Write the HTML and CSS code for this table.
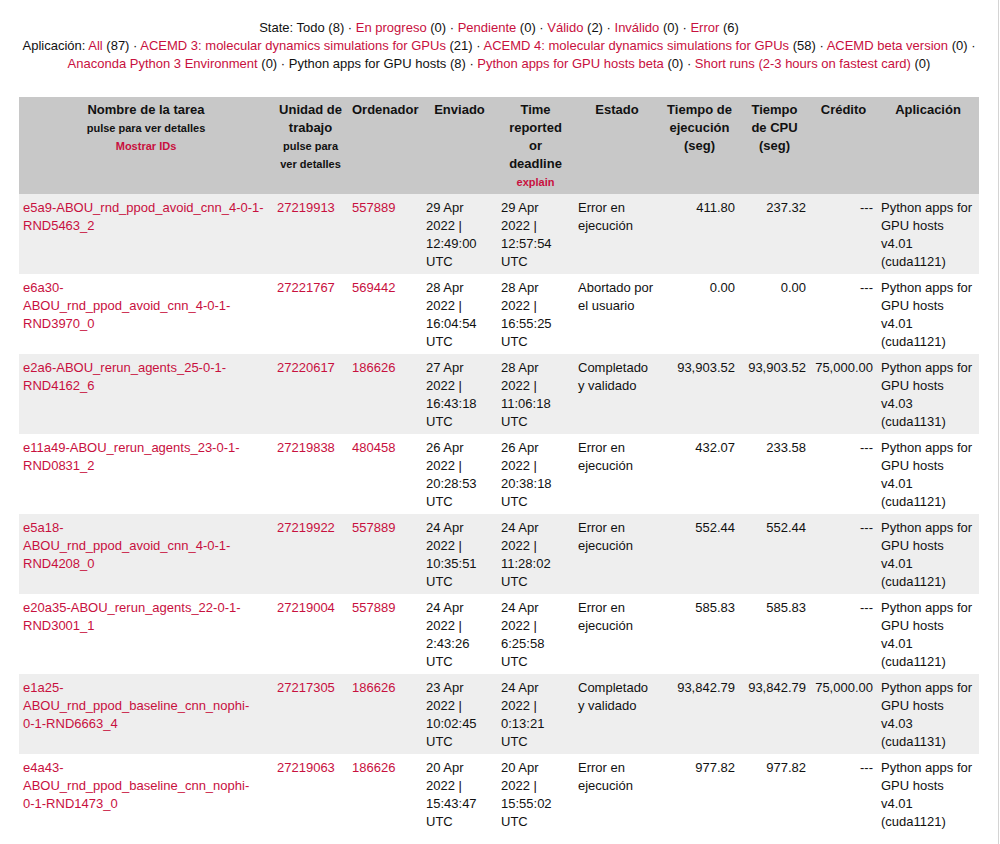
FILE: index.html
```html
<!DOCTYPE html>
<html lang="es">
<head>
<meta charset="utf-8">
<title>Tareas</title>
<link rel="stylesheet" href="styles.css">
</head>
<body>
<div class="page">
  <div class="filters">
    State: Todo (8) · <a href="#">En progreso</a> (0) · <a href="#">Pendiente</a> (0) · <a href="#">Válido</a> (2) · <a href="#">Inválido</a> (0) · <a href="#">Error</a> (6)<br>
    Aplicación: <a href="#">All</a> (87) · <a href="#">ACEMD 3: molecular dynamics simulations for GPUs</a> (21) · <a href="#">ACEMD 4: molecular dynamics simulations for GPUs</a> (58) · <a href="#">ACEMD beta version</a> (0) · <a href="#">Anaconda Python 3 Environment</a> (0) · Python apps for GPU hosts (8) · <a href="#">Python apps for GPU hosts beta</a> (0) · <a href="#">Short runs (2-3 hours on fastest card)</a> (0)
  </div>
  <table class="tasks">
    <colgroup>
      <col class="c-name"><col class="c-wu"><col class="c-host"><col class="c-sent"><col class="c-rep"><col class="c-state"><col class="c-run"><col class="c-cpu"><col class="c-cred"><col class="c-app">
    </colgroup>
    <thead>
      <tr>
        <th>Nombre de la tarea<span class="sub">pulse para ver detalles</span><a class="sub" href="#">Mostrar IDs</a></th>
        <th>Unidad de trabajo<span class="sub">pulse para ver detalles</span></th>
        <th>Ordenador</th>
        <th>Enviado</th>
        <th>Time reported or deadline<a class="sub" href="#">explain</a></th>
        <th>Estado</th>
        <th>Tiempo de ejecución (seg)</th>
        <th>Tiempo de CPU (seg)</th>
        <th>Crédito</th>
        <th>Aplicación</th>
      </tr>
    </thead>
    <tbody>
      <tr>
        <td><a href="#">e5a9-ABOU_rnd_ppod_avoid_cnn_4&#8209;0&#8209;1-RND5463_2</a></td>
        <td><a href="#">27219913</a></td>
        <td><a href="#">557889</a></td>
        <td>29 Apr 2022 | 12:49:00 UTC</td>
        <td>29 Apr 2022 | 12:57:54 UTC</td>
        <td>Error en ejecución</td>
        <td class="num">411.80</td>
        <td class="num">237.32</td>
        <td class="num">---</td>
        <td>Python apps for GPU hosts v4.01 (cuda1121)</td>
      </tr>
      <tr>
        <td><a href="#">e6a30-ABOU_rnd_ppod_avoid_cnn_4&#8209;0&#8209;1-RND3970_0</a></td>
        <td><a href="#">27221767</a></td>
        <td><a href="#">569442</a></td>
        <td>28 Apr 2022 | 16:04:54 UTC</td>
        <td>28 Apr 2022 | 16:55:25 UTC</td>
        <td>Abortado por el usuario</td>
        <td class="num">0.00</td>
        <td class="num">0.00</td>
        <td class="num">---</td>
        <td>Python apps for GPU hosts v4.01 (cuda1121)</td>
      </tr>
      <tr>
        <td><a href="#">e2a6-ABOU_rerun_agents_25&#8209;0&#8209;1-RND4162_6</a></td>
        <td><a href="#">27220617</a></td>
        <td><a href="#">186626</a></td>
        <td>27 Apr 2022 | 16:43:18 UTC</td>
        <td>28 Apr 2022 | 11:06:18 UTC</td>
        <td>Completado y validado</td>
        <td class="num">93,903.52</td>
        <td class="num">93,903.52</td>
        <td class="num">75,000.00</td>
        <td>Python apps for GPU hosts v4.03 (cuda1131)</td>
      </tr>
      <tr>
        <td><a href="#">e11a49-ABOU_rerun_agents_23&#8209;0&#8209;1-RND0831_2</a></td>
        <td><a href="#">27219838</a></td>
        <td><a href="#">480458</a></td>
        <td>26 Apr 2022 | 20:28:53 UTC</td>
        <td>26 Apr 2022 | 20:38:18 UTC</td>
        <td>Error en ejecución</td>
        <td class="num">432.07</td>
        <td class="num">233.58</td>
        <td class="num">---</td>
        <td>Python apps for GPU hosts v4.01 (cuda1121)</td>
      </tr>
      <tr>
        <td><a href="#">e5a18-ABOU_rnd_ppod_avoid_cnn_4&#8209;0&#8209;1-RND4208_0</a></td>
        <td><a href="#">27219922</a></td>
        <td><a href="#">557889</a></td>
        <td>24 Apr 2022 | 10:35:51 UTC</td>
        <td>24 Apr 2022 | 11:28:02 UTC</td>
        <td>Error en ejecución</td>
        <td class="num">552.44</td>
        <td class="num">552.44</td>
        <td class="num">---</td>
        <td>Python apps for GPU hosts v4.01 (cuda1121)</td>
      </tr>
      <tr>
        <td><a href="#">e20a35-ABOU_rerun_agents_22&#8209;0&#8209;1-RND3001_1</a></td>
        <td><a href="#">27219004</a></td>
        <td><a href="#">557889</a></td>
        <td>24 Apr 2022 | 2:43:26 UTC</td>
        <td>24 Apr 2022 | 6:25:58 UTC</td>
        <td>Error en ejecución</td>
        <td class="num">585.83</td>
        <td class="num">585.83</td>
        <td class="num">---</td>
        <td>Python apps for GPU hosts v4.01 (cuda1121)</td>
      </tr>
      <tr>
        <td><a href="#">e1a25-ABOU_rnd_ppod_baseline_cnn_nophi-0&#8209;1&#8209;RND6663_4</a></td>
        <td><a href="#">27217305</a></td>
        <td><a href="#">186626</a></td>
        <td>23 Apr 2022 | 10:02:45 UTC</td>
        <td>24 Apr 2022 | 0:13:21 UTC</td>
        <td>Completado y validado</td>
        <td class="num">93,842.79</td>
        <td class="num">93,842.79</td>
        <td class="num">75,000.00</td>
        <td>Python apps for GPU hosts v4.03 (cuda1131)</td>
      </tr>
      <tr>
        <td><a href="#">e4a43-ABOU_rnd_ppod_baseline_cnn_nophi-0&#8209;1&#8209;RND1473_0</a></td>
        <td><a href="#">27219063</a></td>
        <td><a href="#">186626</a></td>
        <td>20 Apr 2022 | 15:43:47 UTC</td>
        <td>20 Apr 2022 | 15:55:02 UTC</td>
        <td>Error en ejecución</td>
        <td class="num">977.82</td>
        <td class="num">977.82</td>
        <td class="num">---</td>
        <td>Python apps for GPU hosts v4.01 (cuda1121)</td>
      </tr>
    </tbody>
  </table>
</div>
</body>
</html>
```

FILE: styles.css
```css
html, body {
  margin: 0;
  padding: 0;
  background: #fff;
}
body {
  font-family: "Liberation Sans", Arial, sans-serif;
  font-size: 13px;
  line-height: 18px;
  color: #111;
}
.page {
  width: 999px;
  height: 844px;
  box-sizing: border-box;
  padding: 8px;
  border-right: 1px solid #d4d4d4;
  overflow: hidden;
}
a {
  color: #c8103e;
  text-decoration: none;
}
.filters {
  text-align: center;
  margin-top: 11px;
  margin-bottom: 24px;
}
.tasks {
  width: 960px;
  margin: 0 auto;
  border-collapse: collapse;
  table-layout: fixed;
}
.c-name { width: 254px; }
.c-wu { width: 75px; }
.c-host { width: 74px; }
.c-sent { width: 75px; }
.c-rep { width: 77px; }
.c-state { width: 86px; }
.c-run { width: 79px; }
.c-cpu { width: 71px; }
.c-cred { width: 67px; }
.c-app { width: 102px; }
.tasks th {
  background: #c8c8c8;
  font-weight: bold;
  text-align: center;
  vertical-align: top;
  padding: 4px 4px 3px;
}
.tasks th .sub {
  display: block;
  font-size: 11px;
  line-height: 18px;
}
.tasks td {
  padding: 5px 4px 3px;
  vertical-align: top;
  text-align: left;
  height: 72px;
}
.tasks tbody tr:nth-child(odd) td {
  background: #eeeeee;
}
.tasks td.num {
  text-align: right;
}
```
